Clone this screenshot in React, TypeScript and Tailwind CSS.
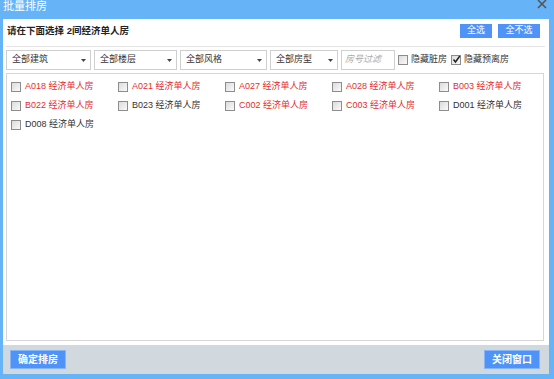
import React from "react";

const FONT = { fontFamily: '"Liberation Sans", "Noto Sans CJK SC", sans-serif' };

type Item = { code: string; red: boolean };
const items: Item[] = [
  { code: "A018", red: true },
  { code: "A021", red: true },
  { code: "A027", red: true },
  { code: "A028", red: true },
  { code: "B003", red: true },
  { code: "B022", red: true },
  { code: "B023", red: false },
  { code: "C002", red: true },
  { code: "C003", red: true },
  { code: "D001", red: false },
  { code: "D008", red: false },
];

function Box({ checked = false }: { checked?: boolean }) {
  return (
    <span className="relative inline-block w-[10px] h-[10px] shrink-0 border border-[#8d8d8d] bg-gradient-to-br from-[#dcdcdc] to-[#fafafa]">
      {checked && (
        <svg className="absolute left-[0px] top-[-1px]" width="9" height="9" viewBox="0 0 9 9">
          <path d="M1.5 4.5 L3.5 7 L7.8 1" fill="none" stroke="#222" strokeWidth="1.5" />
        </svg>
      )}
    </span>
  );
}

function Select({ label, w }: { label: string; w: string }) {
  return (
    <div className={`${w} h-[20px] border border-[#cfcfcf] bg-white flex items-center justify-between pl-[5px] pr-[4px] text-[9px] text-[#333]`}>
      <span>{label}</span>
      <svg width="5" height="3" viewBox="0 0 5 3">
        <path d="M0 0 L5 0 L2.5 3 Z" fill="#444" />
      </svg>
    </div>
  );
}

export default function App() {
  return (
    <div style={FONT} className="w-[554px] h-[379px] bg-[#66b3f7] flex flex-col overflow-hidden">
      <div className="h-[19px] relative pl-[3px] shrink-0">
        <span className="block text-[11px] leading-[12px] mt-[0px] text-white">批量排房</span>
        <svg className="absolute right-[7px] top-[-1px]" width="10" height="10" viewBox="0 0 10 10">
          <path d="M1 1 L9 9 M9 1 L1 9" stroke="#555" strokeWidth="1.6" />
        </svg>
      </div>
      <div className="flex-1 ml-[3px] mr-[5px] bg-white flex flex-col min-h-0">
        <div className="h-[24px] flex items-center justify-between pl-[4px] pr-[9px]">
          <span className="text-[9.5px] font-bold text-[#222]">请在下面选择 2间经济单人房</span>
          <div className="flex gap-[6px]">
            <div className="w-[32px] h-[14px] bg-[#4f93f8] text-white text-[9px] flex items-center justify-center">全选</div>
            <div className="w-[42px] h-[14px] bg-[#4f93f8] text-white text-[9px] flex items-center justify-center">全不选</div>
          </div>
        </div>
        <div className="h-[1px] bg-[#e4e4e4] mt-[3px] ml-[3px] mr-[4px]" />
        <div className="mt-[3px] h-[20px] flex items-center gap-[3px] pl-[3px]">
          <Select label="全部建筑" w="w-[85px]" />
          <Select label="全部楼层" w="w-[83px]" />
          <Select label="全部风格" w="w-[87px]" />
          <Select label="全部房型" w="w-[68px]" />
          <div className="w-[54px] h-[20px] border border-[#cfcfcf] flex items-center pl-[3px] text-[9px] italic text-[#aaa]">房号过滤</div>
          <div className="flex items-center gap-[3px] text-[9px] text-[#333]">
            <Box />
            <span>隐藏脏房</span>
          </div>
          <div className="flex items-center gap-[3px] text-[9px] text-[#333] ml-[1px]">
            <Box checked />
            <span>隐藏预离房</span>
          </div>
        </div>
        <div className="mt-[3px] mb-[4px] ml-[3px] mr-[5px] flex-1 border border-[#d6d6d6] pt-[3px] pl-[4px]">
          <div className="grid grid-cols-[repeat(5,107px)]">
            {items.map((it) => (
              <div key={it.code} className="h-[19px] flex items-center gap-[4px] text-[9px]">
                <Box />
                <span className={it.red ? "text-[#e52d2d]" : "text-[#333]"}>{it.code} 经济单人房</span>
              </div>
            ))}
          </div>
        </div>
      </div>
      <div className="h-[29px] shrink-0 ml-[3px] mr-[5px] bg-[#d1d8de] flex items-center justify-between pl-[7px] pr-[9px]">
        <div className="w-[56px] h-[19px] bg-[#4f93f8] border border-[#86b6f8] text-white text-[10px] font-bold flex items-center justify-center">确定排房</div>
        <div className="w-[56px] h-[19px] bg-[#4f93f8] border border-[#86b6f8] text-white text-[10px] font-bold flex items-center justify-center">关闭窗口</div>
      </div>
      <div className="h-[5px] shrink-0" />
    </div>
  );
}
